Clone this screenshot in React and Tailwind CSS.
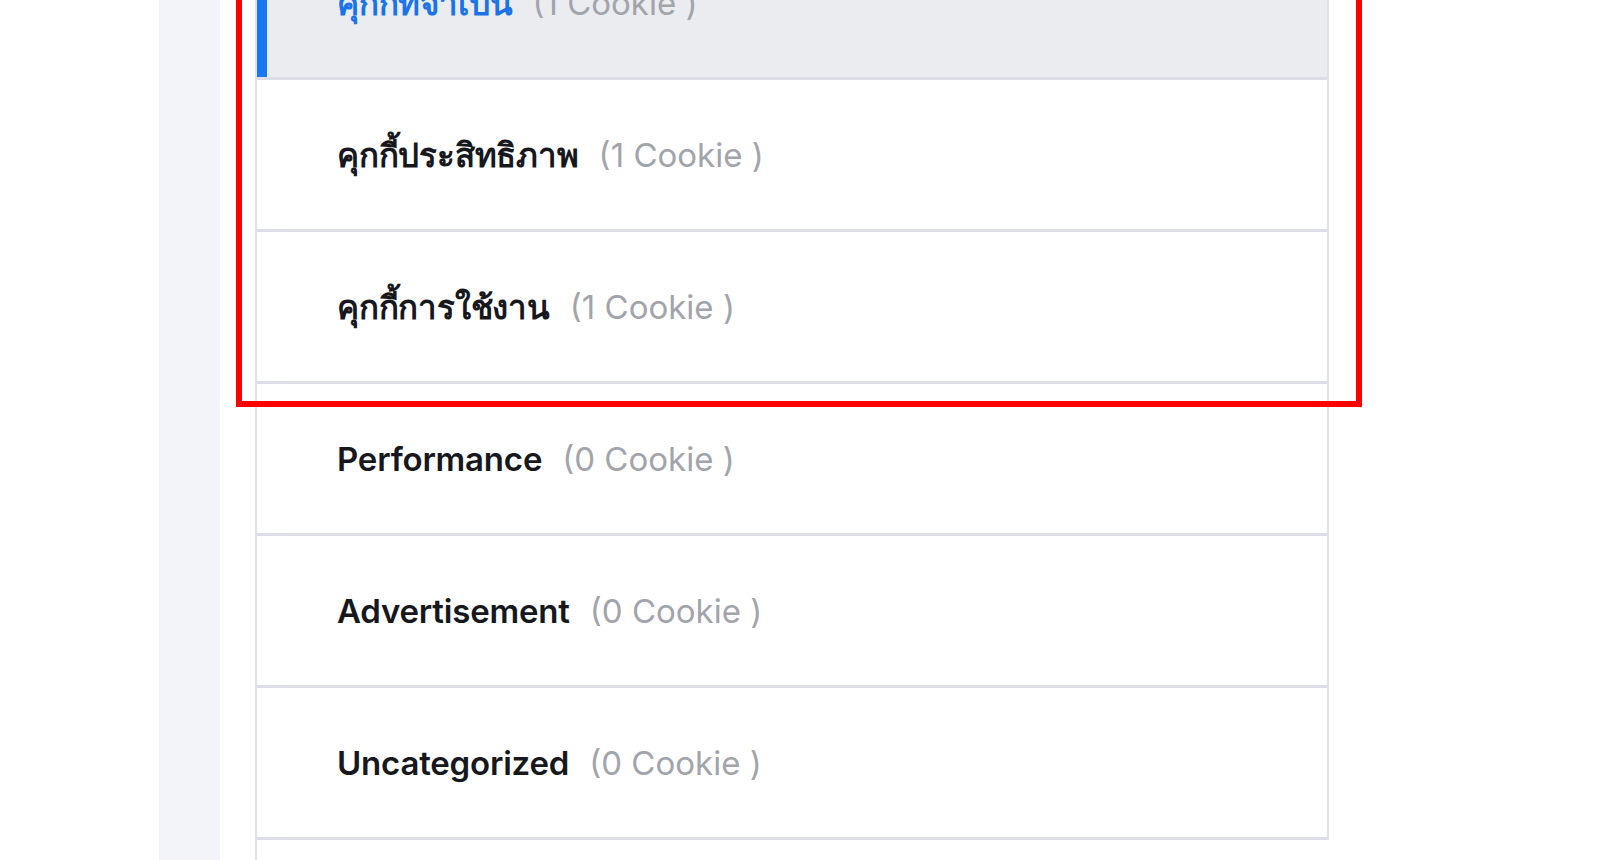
import React from "react";

// ── Cookie category rows ─────────────────────────────────────────────────────
const categories = [
  { name: "คุกกี้ที่จำเป็น", count: 1, active: true },
  { name: "คุกกี้ประสิทธิภาพ", count: 1 },
  { name: "คุกกี้การใช้งาน", count: 1 },
  { name: "Performance", count: 0 },
  { name: "Advertisement", count: 0 },
  { name: "Uncategorized", count: 0 },
];

function CategoryRow({ name, count, active }) {
  return (
    <div
      className={`flex h-[152px] border-b-[3px] border-[#dcdde5] ${
        active ? "bg-[#ebecf0]" : "bg-white"
      }`}
    >
      <div className={`w-[10px] shrink-0 ${active ? "bg-[#1877f2]" : ""}`} />
      <div className="flex items-center pl-[70px] pt-[3px]">
        <span
          className={`text-[33px] font-semibold tracking-[-0.2px] ${
            active ? "text-[#1a73e8]" : "text-[#16181d]"
          }`}
        >
          {name}
        </span>
        <span className="ml-5 text-[33px] text-[#a1a4ab]">({count} Cookie )</span>
      </div>
    </div>
  );
}

export default function App() {
  return (
    <div
      className="relative flex h-[860px] w-full overflow-hidden bg-white"
      style={{ fontFamily: "Inter, 'Noto Sans', 'DejaVu Sans', sans-serif" }}
    >
      {/* Left gutter + light sidebar strip */}
      <div className="w-[159px] shrink-0" />
      <div className="w-[61px] shrink-0 bg-[#f3f4fa]" />
      <div className="w-[35px] shrink-0" />

      {/* Category list card */}
      <div className="-mt-[72px] flex w-[1074px] shrink-0 flex-col">
        <div className="border-x-2 border-[#e0e1ea]">
          {categories.map((c) => (
            <CategoryRow key={c.name} {...c} />
          ))}
        </div>
        <div className="flex-1 border-l-2 border-[#e0e1ea]" />
      </div>

      {/* Red highlight annotation */}
      <div className="pointer-events-none absolute left-[236px] top-[-10px] h-[417px] w-[1126px] border-[6px] border-[#ff0000]" />
    </div>
  );
}
